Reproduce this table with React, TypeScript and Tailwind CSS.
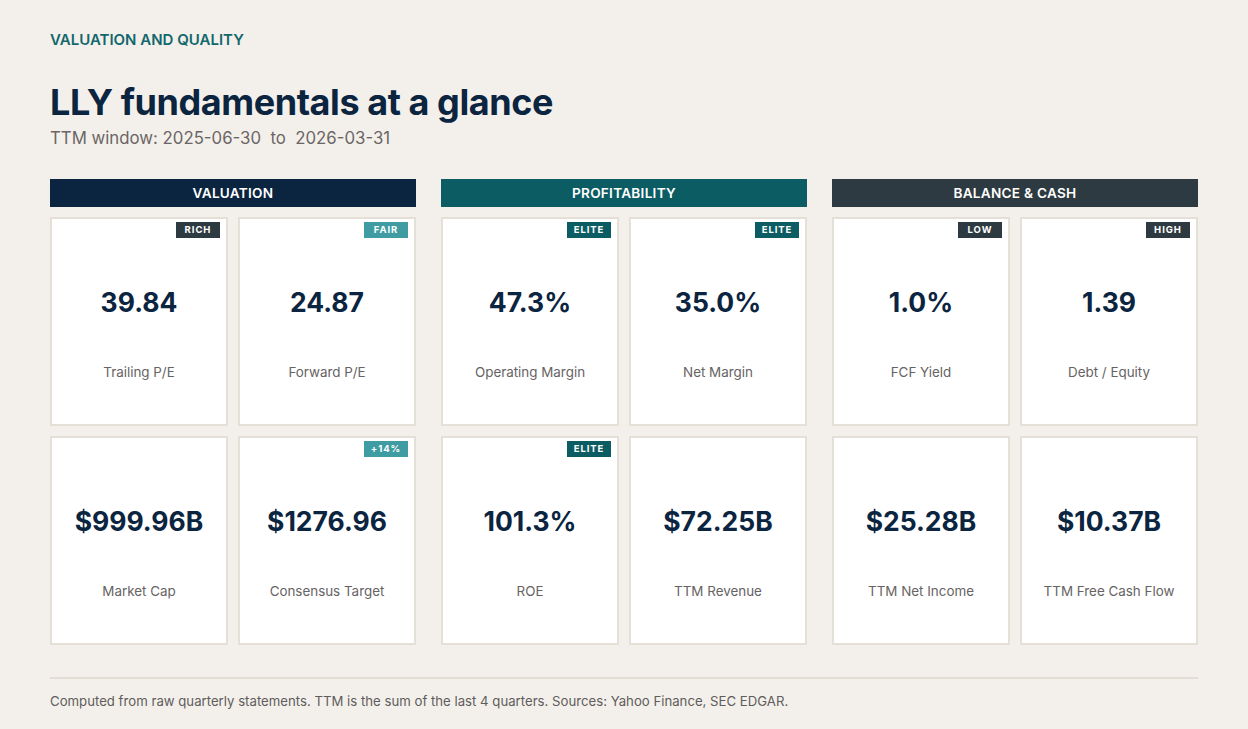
import React from "react";

type Card = { value: string; label: string; badge?: string; badgeColor?: string };
type Group = { title: string; color: string; cards: Card[] };

const SLATE = "bg-[#2d3a41]";
const TEAL = "bg-[#0c5c63]";
const LIGHT = "bg-[#3e9ca2]";

const groups: Group[] = [
  {
    title: "VALUATION",
    color: "bg-[#0b2440]",
    cards: [
      { value: "39.84", label: "Trailing P/E", badge: "RICH", badgeColor: SLATE },
      { value: "24.87", label: "Forward P/E", badge: "FAIR", badgeColor: LIGHT },
      { value: "$999.96B", label: "Market Cap" },
      { value: "$1276.96", label: "Consensus Target", badge: "+14%", badgeColor: LIGHT },
    ],
  },
  {
    title: "PROFITABILITY",
    color: "bg-[#0c5c63]",
    cards: [
      { value: "47.3%", label: "Operating Margin", badge: "ELITE", badgeColor: TEAL },
      { value: "35.0%", label: "Net Margin", badge: "ELITE", badgeColor: TEAL },
      { value: "101.3%", label: "ROE", badge: "ELITE", badgeColor: TEAL },
      { value: "$72.25B", label: "TTM Revenue" },
    ],
  },
  {
    title: "BALANCE & CASH",
    color: "bg-[#2d3a41]",
    cards: [
      { value: "1.0%", label: "FCF Yield", badge: "LOW", badgeColor: SLATE },
      { value: "1.39", label: "Debt / Equity", badge: "HIGH", badgeColor: SLATE },
      { value: "$25.28B", label: "TTM Net Income" },
      { value: "$10.37B", label: "TTM Free Cash Flow" },
    ],
  },
];

function MetricCard({ c }: { c: Card }) {
  return (
    <div className="relative h-[209px] bg-white border-2 border-[#e4dfd7] flex flex-col items-center">
      {c.badge && (
        <div
          className={`absolute top-[3px] right-[6px] w-[44px] h-[16px] flex items-center justify-center text-[9.5px] font-bold tracking-[0.1em] text-white ${c.badgeColor}`}
        >
          {c.badge}
        </div>
      )}
      <div className="mt-[66px] text-[26.5px] leading-[34px] font-bold text-[#0b2440]">{c.value}</div>
      <div className="mt-[43px] text-[13.4px] leading-[20px] text-[#666363]">{c.label}</div>
    </div>
  );
}

export default function App() {
  return (
    <div
      className="min-h-[729px] w-full bg-[#f3f0eb] px-[50px] pt-[30px]"
      style={{ fontFamily: "Inter, 'Noto Sans', sans-serif" }}
    >
      <div className="text-[15px] leading-[20px] font-semibold text-[#12676c]">
        VALUATION AND QUALITY
      </div>
      <h1 className="mt-[30px] text-[36px] leading-[44px] font-bold text-[#0b2440] tracking-[-0.012em]">
        LLY fundamentals at a glance
      </h1>
      <div className="mt-[2px] text-[16.8px] leading-[24px] text-[#6b6565] whitespace-pre">
        {"TTM window: 2025-06-30  to  2026-03-31"}
      </div>
      <div className="mt-[29px] grid grid-cols-3 gap-[25px]">
        {groups.map((g) => (
          <div key={g.title} className="flex flex-col">
            <div
              className={`h-[28px] flex items-center justify-center text-white text-[13.6px] font-semibold tracking-[0.02em] ${g.color}`}
            >
              {g.title}
            </div>
            <div className="mt-[10px] grid grid-cols-2 gap-[10px]">
              {g.cards.map((c) => (
                <MetricCard key={c.label} c={c} />
              ))}
            </div>
          </div>
        ))}
      </div>
      <div className="mt-[32px] border-t-2 border-[#e2ddd5]" />
      <div className="mt-[12px] text-[13.2px] leading-[20px] text-[#5f5c5c]">
        Computed from raw quarterly statements. TTM is the sum of the last 4 quarters. Sources: Yahoo Finance, SEC EDGAR.
      </div>
    </div>
  );
}
